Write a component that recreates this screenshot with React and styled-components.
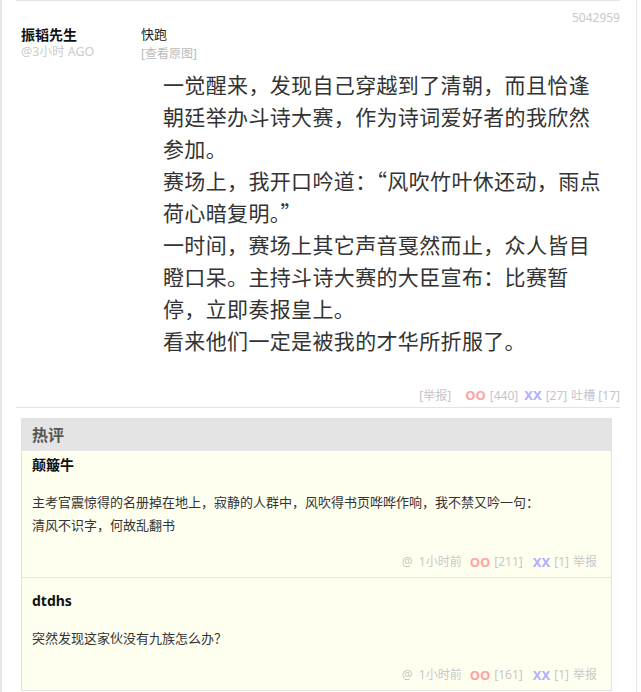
import styled, { createGlobalStyle } from "styled-components";

const GlobalStyle = createGlobalStyle`
  body {
    margin: 0;
    background: #ffffff;
    font-family: "Noto Sans", "Noto Sans CJK SC", sans-serif;
    color: #333333;
  }
`;

const Column = styled.div`
  width: 634px;
  min-height: 692px;
  border-left: 2px solid #e6e6e6;
  border-right: 1px solid #e6e6e6;
  box-sizing: content-box;
`;

const Post = styled.article`
  margin: 0 16px 0 14px;
  border-top: 1px solid #e3e3e3;
  border-bottom: 1px solid #e3e3e3;
  padding: 9px 0 0 5px;
`;

const PostId = styled.div`
  text-align: right;
  font-size: 12px;
  line-height: 16px;
  color: #c8c8c8;
`;

const PostBody = styled.div`
  display: flex;
`;

const Author = styled.div`
  width: 120px;
  flex-shrink: 0;
`;

const AuthorName = styled.div`
  font-size: 14px;
  font-weight: bold;
  line-height: 18px;
  color: #111111;
`;

const Meta = styled.div`
  font-size: ${(p) => p.$size || 12}px;
  line-height: 16px;
  color: ${(p) => p.$color || "#cccccc"};
  margin-top: ${(p) => p.$gap || 0}px;
`;

const Content = styled.div`
  flex: 1;
`;

const Title = styled.div`
  font-size: 13px;
  line-height: 16px;
  color: #222222;
`;

const Story = styled.div`
  margin: 6px 0 0 22px;
  font-family: "Noto Sans CJK SC", sans-serif;
  font-size: 21px;
  letter-spacing: 0.35px;
  line-height: 32px;
  color: #333333;
`;

const VoteBar = styled.div`
  display: flex;
  justify-content: flex-end;
  align-items: center;
  gap: 4px;
  margin-top: 28px;
  height: 22px;
  padding-bottom: 1px;
  font-size: 12px;
  color: #c4c4cc;
`;

const Vote = styled.span`
  font-weight: bold;
  font-size: 13px;
  color: ${(p) => p.$color};
  margin-left: ${(p) => p.$gap || 0}px;
`;

const Hot = styled.section`
  margin: 10px 24px 0 19px;
  border: 1px solid #e2e2e2;
  background: #fffff0;
`;

const HotHeader = styled.h3`
  margin: 0;
  background: #e4e4e4;
  height: 32px;
  line-height: 32px;
  padding-left: 10px;
  font-size: 16px;
  font-weight: bold;
  color: #555555;
`;

const Comment = styled.div`
  padding: 13px 14px 5px 10px;
  & + & {
    border-top: 1px solid #e6e6e0;
  }
  &:first-of-type {
    padding-top: 4px;
  }
`;

const CommentName = styled.div`
  font-size: 14px;
  font-weight: bold;
  line-height: 20px;
  color: #111111;
`;

const CommentText = styled.div`
  margin-top: 15px;
  font-family: "Noto Sans CJK SC", sans-serif;
  font-size: 13px;
  line-height: 23px;
  color: #333333;
`;

const CommentFoot = styled.div`
  display: flex;
  justify-content: flex-end;
  align-items: center;
  gap: 4px;
  margin-top: 16px;
  line-height: 20px;
  font-size: 12px;
  color: #c8c8c8;
`;

function Comments({ name, lines, oo, xx }) {
  return (
    <Comment>
      <CommentName>{name}</CommentName>
      <CommentText>
        {lines.map((l, i) => (
          <div key={i}>{l}</div>
        ))}
      </CommentText>
      <CommentFoot>
        <span>@&nbsp;&nbsp;1小时前</span>
        <Vote $color="#ffa3a3" $gap={4}>OO</Vote>
        <span>[{oo}]</span>
        <Vote $color="#b0b0ff" $gap={6}>XX</Vote>
        <span>[{xx}]</span>
        <span>举报</span>
      </CommentFoot>
    </Comment>
  );
}

export default function App() {
  return (
    <>
      <GlobalStyle />
      <Column>
        <Post>
          <PostId>5042959</PostId>
          <PostBody>
            <Author>
              <AuthorName>振韬先生</AuthorName>
              <Meta $size={12.5}>@3小时 AGO</Meta>
            </Author>
            <Content>
              <Title>快跑</Title>
              <Meta $color="#bbbbbb" $gap={4}>[查看原图]</Meta>
              <Story>
                一觉醒来，发现自己穿越到了清朝，而且恰逢
                <br />
                朝廷举办斗诗大赛，作为诗词爱好者的我欣然
                <br />
                参加。
                <br />
                赛场上，我开口吟道：“风吹竹叶休还动，雨点
                <br />
                荷心暗复明。”
                <br />
                一时间，赛场上其它声音戛然而止，众人皆目
                <br />
                瞪口呆。主持斗诗大赛的大臣宣布：比赛暂
                <br />
                停，立即奏报皇上。
                <br />
                看来他们一定是被我的才华所折服了。
              </Story>
              <VoteBar>
                <span>[举报]</span>
                <Vote $color="#ffa3a3" $gap={10}>OO</Vote>
                <span>[440]</span>
                <Vote $color="#b0b0ff" $gap={2}>XX</Vote>
                <span>[27]</span>
                <span>吐槽 [17]</span>
              </VoteBar>
            </Content>
          </PostBody>
        </Post>
        <Hot>
          <HotHeader>热评</HotHeader>
          <Comments
            name="颠簸牛"
            lines={[
              "主考官震惊得的名册掉在地上，寂静的人群中，风吹得书页哗哗作响，我不禁又吟一句：",
              "清风不识字，何故乱翻书",
            ]}
            oo={211}
            xx={1}
          />
          <Comments
            name="dtdhs"
            lines={["突然发现这家伙没有九族怎么办？"]}
            oo={161}
            xx={1}
          />
        </Hot>
      </Column>
    </>
  );
}
